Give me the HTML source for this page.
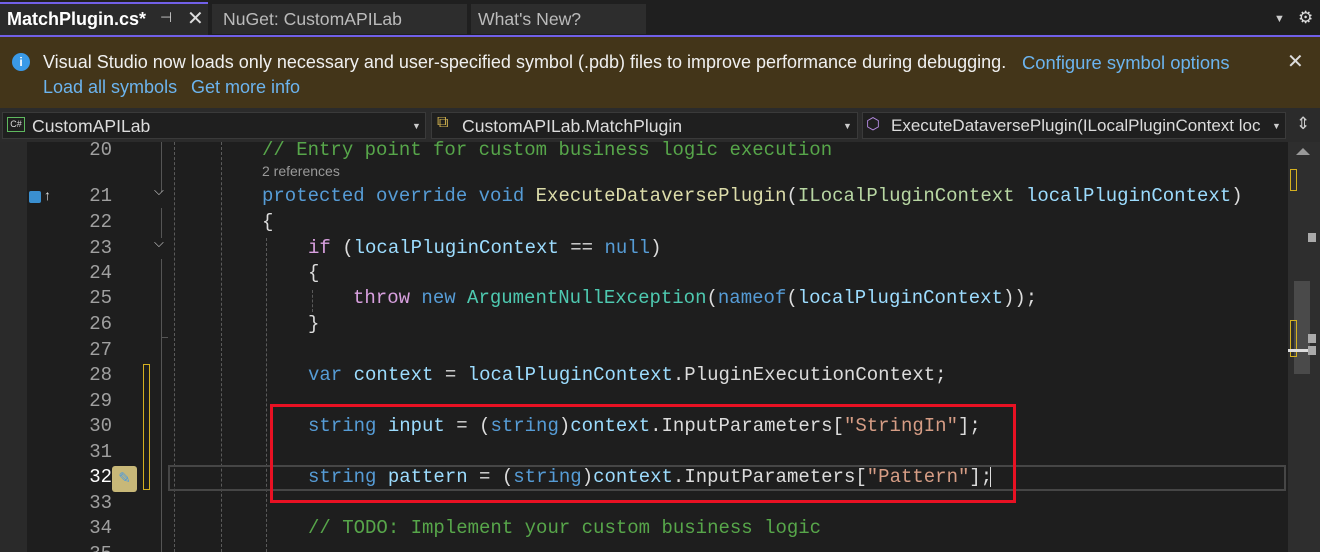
<!DOCTYPE html>
<html><head><meta charset="utf-8"><style>
*{margin:0;padding:0;box-sizing:border-box}
html,body{width:1320px;height:552px;overflow:hidden}
body{background:#1e1e1e;font-family:"Liberation Sans",sans-serif;position:relative}
.a{position:absolute;white-space:pre}
.code{font-family:"Liberation Mono","DejaVu Sans Mono",monospace;font-size:19px;line-height:26px;color:#dcdcdc}
.ln{font-family:"Liberation Mono","DejaVu Sans Mono",monospace;font-size:19px;line-height:26px;color:#a0a0a0;width:50px;text-align:right;left:62px}
.k{color:#569cd6}.c{color:#d8a0df}.t{color:#4ec9b0}.m{color:#dcdcaa}.v{color:#9cdcfe}.s{color:#d69d85}.g{color:#57a64a}.i{color:#b8d7a3}
.ui{font-size:17.6px;color:#dcdcdc}
.link{color:#6cb4ee}
.dash{position:absolute;width:0;border-left:1px dashed #5a5a5a}
</style></head><body>
<div class="a" style="left:0;top:0;width:1320px;height:35px;background:#1f1f1f"></div>
<div class="a" style="left:0;top:2px;width:208px;height:34px;background:#2b2b2b;border-top:2px solid #7160e8"></div>
<div class="a ui" style="left:7px;top:9px;font-weight:bold;color:#fff;font-size:18px">MatchPlugin.cs*</div>
<div class="a" style="left:160px;top:9px;color:#ccc;font-size:14px">⊣</div>
<div class="a" style="left:187px;top:6px;color:#ddd;font-size:20px">✕</div>
<div class="a" style="left:212px;top:4px;width:255px;height:30px;background:#2d2d2d"></div>
<div class="a ui" style="left:223px;top:9px;color:#bbb">NuGet: CustomAPILab</div>
<div class="a" style="left:471px;top:4px;width:175px;height:30px;background:#2d2d2d"></div>
<div class="a ui" style="left:478px;top:9px;color:#bbb">What's New?</div>
<div class="a" style="left:1274px;top:13px;color:#ccc;font-size:11px">▼</div>
<div class="a" style="left:1298px;top:8px;color:#ddd;font-size:17px">⚙</div>
<div class="a" style="left:0;top:35px;width:1320px;height:2px;background:#7160e8"></div>
<div class="a" style="left:0;top:37px;width:1320px;height:71px;background:#433519"></div>
<div class="a" style="left:12px;top:53px;width:18px;height:18px;border-radius:50%;background:#3a9ae8;color:#fff;font-size:12px;text-align:center;line-height:18px;font-weight:bold">i</div>
<div class="a ui" style="left:43px;top:52px;color:#f0f0f0;font-size:18px">Visual Studio now loads only necessary and user-specified symbol (.pdb) files to improve performance during debugging.</div>
<div class="a ui link" style="left:1022px;top:52px;font-size:18.4px">Configure symbol options</div>
<div class="a" style="left:1287px;top:49px;color:#ddd;font-size:20px">✕</div>
<div class="a ui link" style="left:43px;top:77px;font-size:18px">Load all symbols</div>
<div class="a ui link" style="left:191px;top:77px;font-size:18px">Get more info</div>
<div class="a" style="left:0;top:108px;width:1320px;height:34px;background:#2b2b2b"></div>
<div class="a" style="left:2px;top:112px;width:424px;height:27px;background:#1f1f1f;border:1px solid #3a3a3a"></div>
<div class="a" style="left:7px;top:117px;width:18px;height:15px;border:1px solid #5fb85f;color:#ddd;font-size:9px;line-height:13px;text-align:center">C#</div>
<div class="a ui" style="left:32px;top:116px">CustomAPILab</div>
<div class="a" style="left:412px;top:121px;color:#ccc;font-size:9px">▼</div>
<div class="a" style="left:431px;top:112px;width:427px;height:27px;background:#1f1f1f;border:1px solid #3a3a3a"></div>
<div class="a" style="left:437px;top:114px;color:#d8b850;font-size:16px">⧉</div>
<div class="a ui" style="left:462px;top:116px">CustomAPILab.MatchPlugin</div>
<div class="a" style="left:843px;top:121px;color:#ccc;font-size:9px">▼</div>
<div class="a" style="left:862px;top:112px;width:424px;height:27px;background:#1f1f1f;border:1px solid #3a3a3a"></div>
<div class="a" style="left:866px;top:114px;color:#b48ae0;font-size:16px">⬡</div>
<div class="a ui" style="left:891px;top:116px;font-size:17px">ExecuteDataversePlugin(ILocalPluginContext loc</div>
<div class="a" style="left:1272px;top:121px;color:#ccc;font-size:9px">▼</div>
<div class="a" style="left:1296px;top:114px;color:#ccc;font-size:17px">⇕</div>
<div class="a" style="left:0;top:142px;width:27px;height:410px;background:#2a2a2a"></div>
<div class="a" style="left:1288px;top:142px;width:32px;height:410px;background:#2e2e2e"></div>
<div class="a" style="left:1296px;top:148px;width:0;height:0;border-left:7px solid transparent;border-right:7px solid transparent;border-bottom:7px solid #999"></div>
<div class="a" style="left:1290px;top:169px;width:7px;height:22px;border:1px solid #d4b020"></div>
<div class="a" style="left:1308px;top:233px;width:8px;height:9px;background:#aaa"></div>
<div class="a" style="left:1294px;top:281px;width:16px;height:93px;background:#4a4a4a"></div>
<div class="a" style="left:1290px;top:320px;width:7px;height:37px;border:1px solid #d4b020"></div>
<div class="a" style="left:1308px;top:334px;width:8px;height:9px;background:#aaa"></div>
<div class="a" style="left:1288px;top:349px;width:28px;height:3px;background:#ddd"></div>
<div class="a" style="left:1308px;top:346px;width:8px;height:9px;background:#aaa"></div>
<div class="a" style="left:161px;top:142px;width:1px;height:50px;background:#555"></div>
<div class="a" style="left:161px;top:208px;width:1px;height:30px;background:#555"></div>
<div class="a" style="left:161px;top:259px;width:1px;height:293px;background:#555"></div>
<div class="a" style="left:161px;top:337px;width:7px;height:1px;background:#555"></div>
<div class="dash" style="left:174px;top:142px;height:410px"></div>
<div class="dash" style="left:221px;top:142px;height:410px"></div>
<div class="dash" style="left:266px;top:238px;height:314px"></div>
<div class="dash" style="left:312px;top:290px;height:22px"></div>
<div class="a" style="left:143px;top:364px;width:7px;height:126px;border:1px solid #d4b020"></div>
<div class="a" style="left:168px;top:465px;width:1118px;height:26px;border:2px solid #464646"></div>
<div class="a" style="left:29px;top:191px;width:12px;height:12px;background:#3a8fd0;border-radius:2px"></div>
<div class="a" style="left:44px;top:187px;color:#ddd;font-size:14px">↑</div>
<div class="a" style="left:154px;top:183px;color:#ccc;font-size:13px">⌵</div>
<div class="a" style="left:154px;top:235px;color:#ccc;font-size:13px">⌵</div>
<div class="a" style="left:112px;top:466px;width:25px;height:26px;background:#c8b878;border-radius:3px;color:#4a9ae0;font-size:15px;text-align:center;line-height:26px">✎</div>
<div class="a ln" style="top:137px">20</div>
<div class="a ln" style="top:183px">21</div>
<div class="a ln" style="top:209px">22</div>
<div class="a ln" style="top:235px">23</div>
<div class="a ln" style="top:260px">24</div>
<div class="a ln" style="top:285px">25</div>
<div class="a ln" style="top:311px">26</div>
<div class="a ln" style="top:337px">27</div>
<div class="a ln" style="top:362px">28</div>
<div class="a ln" style="top:388px">29</div>
<div class="a ln" style="top:413px">30</div>
<div class="a ln" style="top:439px">31</div>
<div class="a ln" style="top:464px;color:#fff">32</div>
<div class="a ln" style="top:490px">33</div>
<div class="a ln" style="top:515px">34</div>
<div class="a ln" style="top:541px">35</div>
<div class="a code g" style="left:262px;top:137px">// Entry point for custom business logic execution</div>
<div class="a" style="left:262px;top:163px;color:#999;font-size:14px">2 references</div>
<div class="a code" style="left:262px;top:183px"><span class="k">protected override void</span> <span class="m">ExecuteDataversePlugin</span>(<span class="i">ILocalPluginContext</span> <span class="v">localPluginContext</span>)</div>
<div class="a code" style="left:262px;top:209px">{</div>
<div class="a code" style="left:308px;top:235px"><span class="c">if</span> (<span class="v">localPluginContext</span> == <span class="k">null</span>)</div>
<div class="a code" style="left:308px;top:260px">{</div>
<div class="a code" style="left:353px;top:285px"><span class="c">throw</span> <span class="k">new</span> <span class="t">ArgumentNullException</span>(<span class="k">nameof</span>(<span class="v">localPluginContext</span>));</div>
<div class="a code" style="left:308px;top:311px">}</div>
<div class="a code" style="left:308px;top:362px"><span class="k">var</span> <span class="v">context</span> = <span class="v">localPluginContext</span>.PluginExecutionContext;</div>
<div class="a code" style="left:308px;top:413px"><span class="k">string</span> <span class="v">input</span> = (<span class="k">string</span>)<span class="v">context</span>.InputParameters[<span class="s">"StringIn"</span>];</div>
<div class="a code" style="left:308px;top:464px"><span class="k">string</span> <span class="v">pattern</span> = (<span class="k">string</span>)<span class="v">context</span>.InputParameters[<span class="s">"Pattern"</span>];</div>
<div class="a" style="left:990px;top:467px;width:1px;height:20px;background:#ddd"></div>
<div class="a code g" style="left:308px;top:515px">// TODO: Implement your custom business logic</div>
<div class="a" style="left:270px;top:404px;width:746px;height:99px;border:3px solid #e81123"></div>
</body></html>
